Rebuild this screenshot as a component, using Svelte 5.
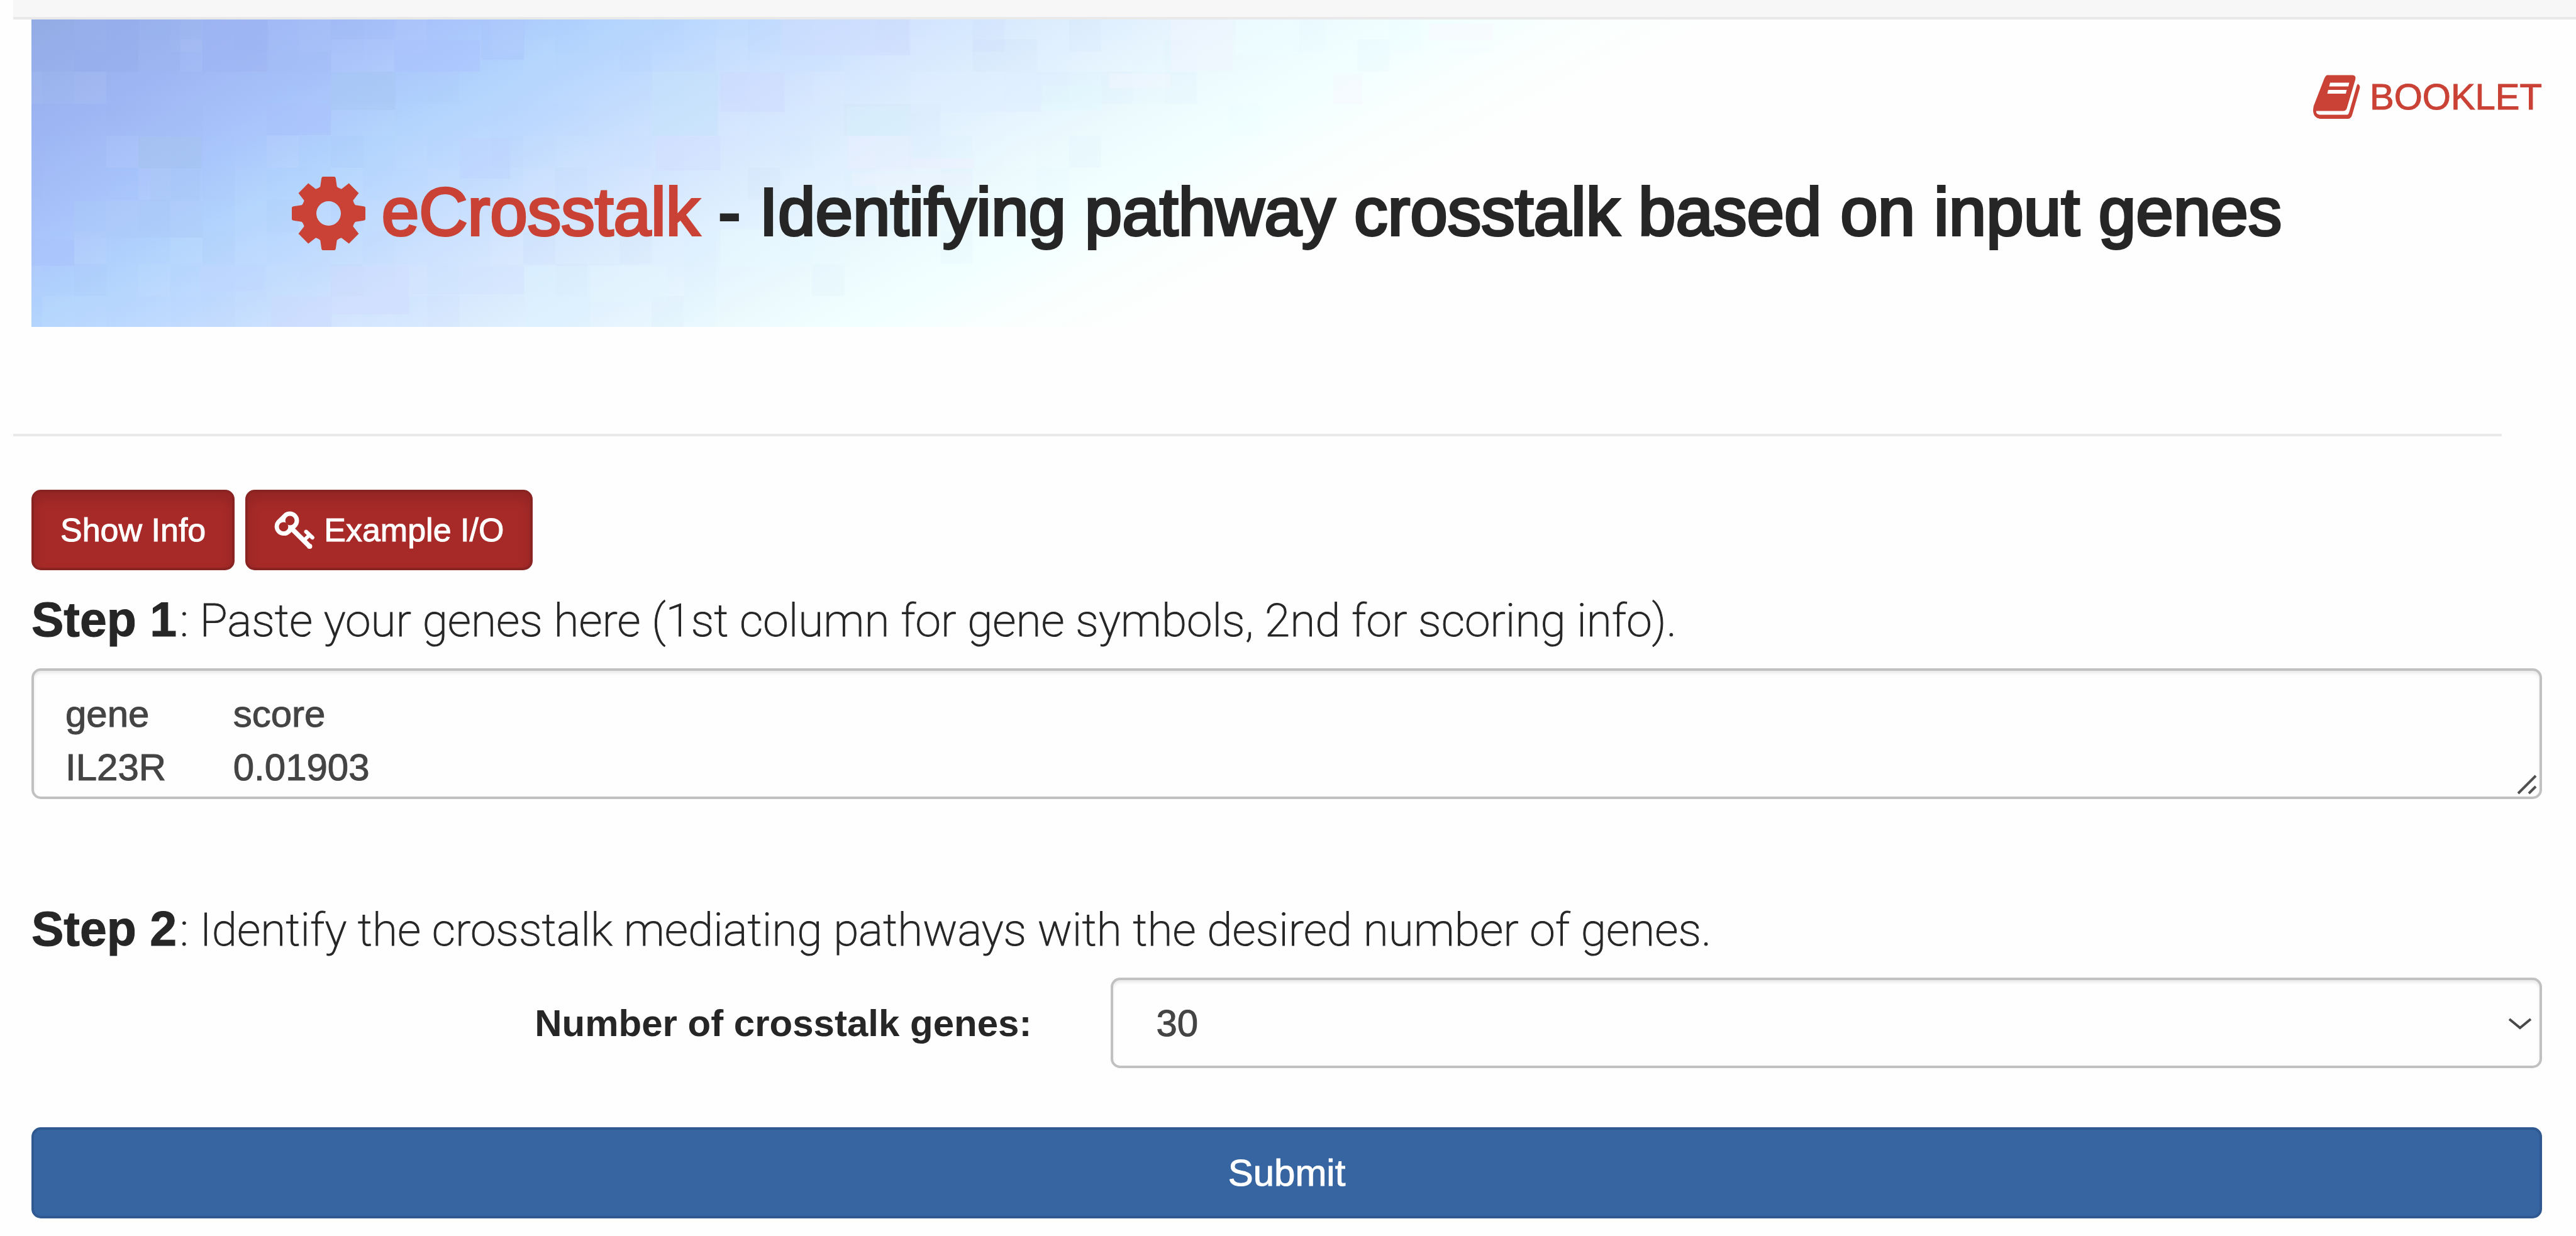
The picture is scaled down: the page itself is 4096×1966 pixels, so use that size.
<script>
  let genes = $state('gene\tscore\nIL23R\t0.01903');
  let count = $state('30');
  const counts = ['10', '20', '30', '40', '50'];

  // Colour stops of the sky backdrop, as [offset, colour]
  const stops = [
    [0, '#93abe4'], [0.06, '#97b0ec'], [0.14, '#9eb7f4'], [0.24, '#a8c3fb'],
    [0.34, '#b2d4fd'], [0.42, '#bfdafe'], [0.51, '#cfe3fe'], [0.63, '#dfeffe'],
    [0.75, '#ecfafe'], [0.83, '#f1ffff'], [0.92, '#fafffe'], [1, '#fefefe'],
  ];

  // Larger tinted tiles of the backdrop: x, y, width, height, colour
  const tiles = [
    [68, 0, 102, 83, '#95adeb'], [170, 0, 66, 83, '#9ab4f0'], [272, 0, 102, 83, '#a0b4f4'],
    [376, 0, 100, 83, '#a4bef8'], [577, 33, 136, 50, '#aac2fd'], [715, 0, 68, 64, '#a9c6fc'],
    [374, 134, 102, 50, '#a8c0fc'], [476, 83, 102, 61, '#a7c7f2'], [170, 187, 100, 50, '#a3c4ec'],
    [189, 237, 79, 52, '#a8c8f5'], [0, 350, 68, 42, '#a8c2fc'], [68, 289, 204, 58, '#abcaf7'],
    [1193, 0, 204, 57, '#cddbfe'], [1095, 83, 102, 64, '#cdd9fd'], [993, 186, 102, 54, '#d1ddfe'],
    [681, 189, 80, 64, '#bdd4fe'], [476, 392, 124, 77, '#cfdbfe'], [381, 440, 96, 49, '#cbdafe'],
    [268, 392, 102, 40, '#bfd5fd'], [987, 83, 104, 102, '#c4e2fa'], [1295, 138, 102, 47, '#d5f0fb'],
    [1397, 83, 208, 64, '#dfeeff'], [1298, 186, 102, 54, '#e7eefe'], [1304, 244, 192, 20, '#ebf1fe'],
    [1397, 221, 102, 16, '#edf0fe'], [1606, 105, 96, 39, '#dff8fe'], [602, 392, 181, 45, '#d2e4fe'],
    [783, 392, 104, 97, '#daf1fe'], [887, 392, 124, 58, '#e3f6fe'], [1095, 334, 204, 58, '#e8f9fe'],
    [1811, 0, 98, 82, '#f1f3fe'], [1713, 86, 98, 23, '#f2f5fe'], [2222, 7, 102, 26, '#f7f8fe'],
    [2070, 86, 46, 49, '#f5f8fe'], [2252, 44, 72, 10, '#f3fdfe'], [1914, 0, 102, 56, '#edfdff'],
  ];

  // Fine light and dark grain laid over the gradient
  const grain = [];
  for (let row = 0; row < 10; row += 1) {
    for (let col = 0; col < 48; col += 1) {
      const x = col === 0 ? 0 : 17 + (col - 1) * 51;
      const y = row === 0 ? 0 : 32 + (row - 1) * 51;
      const n = (col * 37 + row * 61 + col * row * 17) % 23;
      const depth = x + y * 2;
      if (depth < 2200 && n < 12) {
        grain.push({ x, y, w: col === 0 ? 17 : 51, fill: n % 2 ? '#ffffff' : '#8fb4f0', o: 0.02 + (n % 4) * 0.01 });
      }
    }
  }
</script>

<div class="topbar"></div>
<main>
  <header>
    <svg class="sky" viewBox="0 0 3991 489" preserveAspectRatio="none" aria-hidden="true">
      <defs>
        <linearGradient id="sky" gradientUnits="userSpaceOnUse" x1="0" y1="0" x2="583" y2="1108">
          {#each stops as [offset, color]}
            <stop {offset} stop-color={color} />
          {/each}
        </linearGradient>
      </defs>
      <rect width="3991" height="489" fill="url(#sky)" />
      {#each grain as g}
        <rect x={g.x} y={g.y} width={g.w} height="51" fill={g.fill} opacity={g.o} />
      {/each}
      {#each tiles as [x, y, w, h, fill]}
        <rect {x} {y} width={w} height={h} {fill} opacity="0.5" />
      {/each}
    </svg>
    <a class="booklet" href="#booklet">
      <svg width="75" height="70" viewBox="0 0 75 70" aria-hidden="true">
        <path fill="currentColor" fill-rule="evenodd" d="M22 .5H62Q69 .5 67 8L53.5 53.5Q52 57.5 48 57.5H5Q4 62 10 63.5H54Q56 63.5 57 60.5L69.5 17L71 14.5Q75.5 17 74 22L62 64Q60 70 55 70H11Q0 68 0 56Q.5 50 1.5 48L17 8Q19 2 22 .5ZM27 12.5L25.5 18.5H56L57.5 12.5ZM24 24L22.5 30H52L53.5 24Z" />
      </svg>
      <span>BOOKLET</span>
    </a>
    <h1>
      <svg width="117" height="117" viewBox="-58.5 -58.5 117 117" aria-hidden="true">
        <path fill="currentColor" fill-rule="evenodd" d="M-9-58.5H9Q11-58.5 11.3-56L13.2-43Q14-41 20.4-38.8L32.3-47.9L47.9-32.3L38.8-20.4Q41-14 43-13.2L56-11.3Q58.5-11 58.5-9V9Q58.5 11 56 11.3L43 13.2Q41 14 38.8 20.4L47.9 32.3L32.3 47.9L20.4 38.8Q14 41 13.2 43L11.3 56Q11 58.5 9 58.5H-9Q-11 58.5-11.3 56L-13.2 43Q-14 41-20.4 38.8L-32.3 47.9L-47.9 32.3L-38.8 20.4Q-41 14-43 13.2L-56 11.3Q-58.5 11-58.5 9V-9Q-58.5-11-56-11.3L-43-13.2Q-41-14-38.8-20.4L-47.9-32.3L-32.3-47.9L-20.4-38.8Q-14-41-13.2-43L-11.3-56Q-11-58.5-9-58.5ZM0-19.5A19.5 19.5 0 1 0 0 19.5A19.5 19.5 0 1 0 0-19.5Z" />
      </svg>
      <span><span class="brand">eCrosstalk</span> - Identifying pathway crosstalk based on input genes</span>
    </h1>
  </header>
</main>
<hr />
<main>
  <div class="actions">
    <button type="button" class="red">Show Info</button>
    <button type="button" class="red">
      <svg width="65" height="61" viewBox="112 98 288 270" aria-hidden="true">
        <mask id="bow" maskUnits="userSpaceOnUse" x="100" y="90" width="310" height="290">
          <rect x="100" y="90" width="310" height="290" fill="#fff" />
          <circle cx="223" cy="164" r="33" />
          <circle cx="178" cy="208" r="33" />
        </mask>
        <g mask="url(#bow)" fill="none" stroke="#fff">
          <path d="M222 165L180 206" stroke-width="130" stroke-linecap="round" />
          <path d="M236 222L361 346" stroke-width="34" />
          <path d="M361 346h1" stroke-width="36" stroke-linecap="round" />
          <path d="M337 243L381 284" stroke-width="28" stroke-linecap="round" />
          <path d="M325 300L362 266" stroke-width="26" />
        </g>
      </svg>
      Example I/O
    </button>
  </div>

  <form onsubmit={(e) => e.preventDefault()}>
    <label class="step" for="genes"><b>Step 1</b>: Paste your genes here (1st column for gene symbols, 2nd for scoring info).</label>
    <div class="field">
      <textarea id="genes" rows="2" bind:value={genes}></textarea>
      <svg class="grip" width="32" height="32" viewBox="0 0 32 32" aria-hidden="true">
        <path d="M2 30L30 2M19 30L30 19" stroke="#505050" stroke-width="4" />
      </svg>
    </div>

    <p class="step second"><b>Step 2</b>: Identify the crosstalk mediating pathways with the desired number of genes.</p>
    <div class="row">
      <label for="count">Number of crosstalk genes:</label>
      <div class="field">
        <select id="count" bind:value={count}>
          {#each counts as c}
            <option value={c}>{c}</option>
          {/each}
        </select>
        <svg class="chevron" width="38" height="20" viewBox="0 0 38 20" aria-hidden="true">
          <path d="M2 2L19 16L36 2" fill="none" stroke="#484848" stroke-width="4" />
        </svg>
      </div>
    </div>
    <button type="submit" class="submit">Submit</button>
  </form>
</main>

<style>
  :global(body) {
    background: #fefefe;
    color: #262626;
    font-family: 'Liberation Sans', Arial, sans-serif;
    font-size: 60px;
    line-height: 85px;
  }
  .topbar {
    box-sizing: border-box;
    height: 31px;
    margin-left: 21px;
    background: #f7f7f7;
    border-bottom: 4px solid #e9e9e9;
  }
  main {
    margin: 0 54px 0 50px;
  }
  header {
    position: relative;
    display: flex;
    flex-direction: column;
    padding: 80px 0 122px;
  }
  .sky {
    position: absolute;
    inset: 0;
    z-index: -1;
    width: 100%;
    height: 100%;
  }
  .booklet {
    display: flex;
    align-items: center;
    align-self: flex-end;
    gap: 15px;
    color: #ca4135;
    font-size: 58px;
    text-decoration: none;
    -webkit-text-stroke: 1px currentColor;
  }
  h1 {
    display: flex;
    align-items: flex-end;
    justify-content: center;
    gap: 26px;
    margin: 80px 0 0;
    font-size: 107px;
    font-weight: 400;
    line-height: 122px;
    white-space: nowrap;
    -webkit-text-stroke: 4px currentColor;
  }
  h1 svg,
  .brand {
    color: #ca4135;
  }
  .brand {
    -webkit-text-stroke-color: #ca4135;
  }
  hr {
    height: 4px;
    margin: 170px 118px 85px 21px;
    border: 0;
    background: #e9e9e9;
  }
  .actions {
    display: flex;
    gap: 17px;
    margin-bottom: 36px;
  }
  button {
    border: 4px solid;
    border-radius: 15px;
    color: #fff;
    font-family: inherit;
    -webkit-text-stroke: 1px currentColor;
  }
  .red {
    display: flex;
    align-items: center;
    gap: 14px;
    height: 128px;
    padding: 0 42px;
    border-color: #8a2422;
    background: #a72a28;
    box-shadow: inset 0 11px 19px rgba(0, 0, 0, 0.13);
    font-size: 52px;
  }
  .step {
    display: block;
    margin: 0 0 34px;
    font-family: Roboto, sans-serif;
    font-size: 73px;
    font-weight: 200;
    line-height: 84px;
    -webkit-text-stroke: 1px currentColor;
  }
  .step b {
    margin-right: 5px;
    font-family: 'Liberation Sans', Arial, sans-serif;
    font-size: 77px;
    font-weight: 700;
  }
  .second {
    margin-top: 164px;
  }
  .field {
    position: relative;
    display: flex;
  }
  textarea,
  select {
    box-sizing: border-box;
    width: 100%;
    margin: 0;
    border: 4px solid #c1c1c1;
    border-radius: 15px;
    background: #fefefe;
    box-shadow: inset 0 4px 4px rgba(0, 0, 0, 0.08);
    color: #444;
    font: inherit;
    -webkit-text-stroke: 1px currentColor;
  }
  textarea {
    height: 208px;
    padding: 26px 50px 0;
    overflow: hidden;
    resize: none;
  }
  select {
    height: 144px;
    padding: 0 68px;
    appearance: none;
  }
  .grip {
    position: absolute;
    right: 8px;
    bottom: 7px;
  }
  .chevron {
    position: absolute;
    top: 64px;
    right: 16px;
    pointer-events: none;
  }
  .row {
    display: grid;
    grid-template-columns: 1590fr 2275fr;
    align-items: center;
    gap: 126px;
    margin-bottom: 94px;
    font-weight: 700;
  }
  .row label {
    text-align: right;
  }
  .row select {
    font-weight: 400;
  }
  .submit {
    width: 100%;
    height: 145px;
    border-color: #2f5990;
    background: #3665a2;
    font-size: 60px;
  }
</style>
